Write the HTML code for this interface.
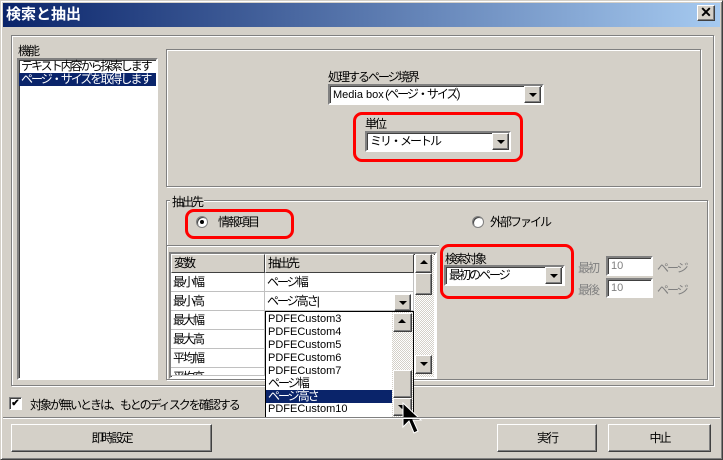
<!DOCTYPE html><html><head><meta charset="utf-8"><style>
*{box-sizing:border-box;margin:0;padding:0}
body{width:723px;height:460px;background:#d4d0c8;font:12px "Liberation Sans","Noto Sans CJK JP",sans-serif;letter-spacing:-2px;color:#000;position:relative;overflow:hidden}
.a{position:absolute;white-space:nowrap}
.lat{letter-spacing:0;font-size:11px}
.win{left:0;top:0;width:723px;height:460px;border:1px solid;border-color:#d4d0c8 #404040 #404040 #d4d0c8;box-shadow:inset 1px 1px #fff,inset -1px -1px #808080}
.title{left:3px;top:3px;width:717px;height:24px;background:linear-gradient(90deg,#0a246a,#a6caf0);color:#fff;font-weight:bold;font-size:15px;padding:3px 3px;line-height:18px;letter-spacing:0}
.etch{border:1px solid #808080;box-shadow:1px 1px #fff,inset 1px 1px #fff}
.sunk{border:1px solid;border-color:#808080 #fff #fff #808080;box-shadow:inset 1px 1px #404040}
.field{background:#fff;border:2px solid;border-color:#808080 #fff #fff #808080;box-shadow:inset 1px 1px #404040;padding-left:3px;line-height:16px}
.btn{background:#d4d0c8;border:1px solid;border-color:#fff #404040 #404040 #fff;box-shadow:inset -1px -1px #808080;text-align:center}
.arr{width:17px;height:17px}
.dn::after,.up::after{content:"";position:absolute;left:4px;top:6px;border-left:4px solid transparent;border-right:4px solid transparent}
.dn::after{border-top:4px solid #000}
.up::after{border-bottom:4px solid #000;top:5px}
.red{border:3px solid #f00;border-radius:9px}
.cell{background:#fff;border-right:1px solid #c0c0c0;border-bottom:1px solid #c0c0c0;height:19px;line-height:19px;padding-left:2px}
.hd{background:#d4d0c8;border:1px solid;border-color:#fff #404040 #404040 #fff;height:19px;line-height:17px;padding-left:2px}
.chk{background:repeating-conic-gradient(#fff 0 25%,#d4d0c8 0 50%) 0 0/2px 2px}
.li{height:13px;line-height:13px;padding-left:2px}
</style></head><body>
<div class="a win"></div>
<div class="a title">検索と抽出</div>
<div class="a btn" style="left:697px;top:5px;width:18px;height:16px;font-weight:bold;line-height:13px;font-size:14px;letter-spacing:0">✕</div>

<div class="a etch" style="left:11px;top:35px;width:703px;height:351px"></div>
<div class="a" style="left:18px;top:42px">機能</div>
<div class="a sunk" style="left:17px;top:58px;width:141px;height:322px;background:#fff;border-width:2px"></div>
<div class="a li" style="left:19px;top:60px;width:137px">テキスト内容から探索します</div>
<div class="a li" style="left:19px;top:73px;width:137px;background:#0a246a;color:#fff">ページ・サイズを取得します</div>

<div class="a etch" style="left:166px;top:49px;width:535px;height:138px"></div>
<div class="a" style="left:328px;top:68px">処理するページ境界</div>
<div class="a field" style="left:328px;top:84px;width:216px;height:21px"><span class="lat">Media box</span> (ページ・サイズ)</div>
<div class="a btn arr dn" style="left:524px;top:86px"></div>
<div class="a red" style="left:353px;top:112px;width:170px;height:50px"></div>
<div class="a" style="left:365px;top:115px">単位</div>
<div class="a field" style="left:365px;top:131px;width:146px;height:21px">ミリ・メートル</div>
<div class="a btn arr dn" style="left:492px;top:133px"></div>

<div class="a etch" style="left:166px;top:200px;width:542px;height:180px"></div>
<div class="a" style="left:170px;top:193px;background:#d4d0c8;padding:0 2px">抽出先</div>
<div class="a red" style="left:185px;top:209px;width:109px;height:30px"></div>
<div class="a" style="left:196px;top:216px;width:12px;height:12px;border-radius:50%;background:#fff;border:1px solid #808080;box-shadow:inset 1px 1px #404040"></div>
<div class="a" style="left:200px;top:220px;width:4px;height:4px;border-radius:50%;background:#000"></div>
<div class="a" style="left:218px;top:213px">情報項目</div>
<div class="a" style="left:472px;top:216px;width:12px;height:12px;border-radius:50%;background:#fff;border:1px solid #808080;box-shadow:inset 1px 1px #404040"></div>
<div class="a" style="left:490px;top:213px">外部ファイル</div>
<div class="a" style="left:167px;top:245px;width:272px;height:2px;border-top:1px solid #808080;border-bottom:1px solid #fff"></div>

<div class="a sunk" style="left:169px;top:252px;width:268px;height:127px;background:#fff;border-width:2px"></div>
<div class="a hd" style="left:171px;top:254px;width:94px">変数</div>
<div class="a hd" style="left:265px;top:254px;width:149px">抽出先</div>
<div class="a cell" style="left:171px;top:273px;width:94px">最小幅</div><div class="a cell" style="left:265px;top:273px;width:149px">ページ幅</div>
<div class="a cell" style="left:171px;top:292px;width:94px">最小高</div><div class="a cell" style="left:265px;top:292px;width:149px">ページ高さ|</div>
<div class="a btn arr dn" style="left:394px;top:294px"></div>
<div class="a cell" style="left:171px;top:311px;width:94px">最大幅</div>
<div class="a cell" style="left:171px;top:330px;width:94px">最大高</div>
<div class="a cell" style="left:171px;top:349px;width:94px">平均幅</div>
<div class="a cell" style="left:171px;top:368px;width:94px;height:8px;overflow:hidden">平均高</div>
<div class="a chk" style="left:415px;top:254px;width:19px;height:123px"></div>
<div class="a btn arr up" style="left:415px;top:254px;height:19px"></div>
<div class="a btn" style="left:415px;top:273px;width:17px;height:22px"></div>
<div class="a btn arr dn" style="left:415px;top:355px;height:19px"></div>

<div class="a" style="left:265px;top:311px;width:149px;height:107px;background:#fff;border:1px solid #000"></div>
<div class="a li lat" style="left:266px;top:313px">PDFECustom3</div>
<div class="a li lat" style="left:266px;top:326px">PDFECustom4</div>
<div class="a li lat" style="left:266px;top:339px">PDFECustom5</div>
<div class="a li lat" style="left:266px;top:352px">PDFECustom6</div>
<div class="a li lat" style="left:266px;top:365px">PDFECustom7</div>
<div class="a li" style="left:266px;top:377px">ページ幅</div>
<div class="a li" style="left:266px;top:390px;width:126px;background:#0a246a;color:#fff">ページ高さ</div>
<div class="a chk" style="left:392px;top:312px;width:21px;height:105px"></div>
<div class="a btn arr up" style="left:393px;top:313px;width:19px;height:19px"></div>
<div class="a btn" style="left:393px;top:370px;width:19px;height:28px"></div>
<div class="a btn arr dn" style="left:393px;top:398px;width:19px;height:18px"></div>

<div class="a red" style="left:440px;top:244px;width:134px;height:55px"></div>
<div class="a" style="left:445px;top:250px">検索対象</div>
<div class="a field" style="left:444px;top:265px;width:121px;height:21px">最初のページ</div>
<div class="a btn arr dn" style="left:545px;top:267px"></div>
<div class="a" style="left:578px;top:259px;color:#808080">最初</div>
<div class="a field lat" style="left:606px;top:256px;width:47px;height:20px;color:#808080">10</div>
<div class="a" style="left:657px;top:259px;color:#808080">ページ</div>
<div class="a" style="left:578px;top:281px;color:#808080">最後</div>
<div class="a field lat" style="left:606px;top:278px;width:47px;height:20px;color:#808080">10</div>
<div class="a" style="left:657px;top:281px;color:#808080">ページ</div>

<div class="a" style="left:9px;top:397px;width:13px;height:13px;background:#fff;border:1px solid;border-color:#808080 #fff #fff #808080;box-shadow:inset 1px 1px #404040;font-size:10px;line-height:11px;text-align:center;font-weight:bold;letter-spacing:0">✔</div>
<div class="a" style="left:30px;top:396px">対象が無いときは、もとのディスクを確認する</div>
<div class="a" style="left:266px;top:403px;width:126px;height:14px;background:#fff"></div>
<div class="a li lat" style="left:266px;top:403px">PDFECustom10</div>
<svg class="a" style="left:402px;top:402px" width="24" height="34"><path d="M1 1V25L7 19L12 31L16 29L11 18H19Z" fill="#000" stroke="#fff" stroke-width="1"/></svg>
<div class="a" style="left:3px;top:417px;width:717px;height:2px;border-top:1px solid #808080;border-bottom:1px solid #fff"></div>
<div class="a btn" style="left:11px;top:424px;width:201px;height:28px;line-height:26px">即時設定</div>
<div class="a btn" style="left:497px;top:424px;width:100px;height:28px;line-height:26px">実行</div>
<div class="a btn" style="left:608px;top:424px;width:103px;height:28px;line-height:26px">中止</div>
</body></html>
